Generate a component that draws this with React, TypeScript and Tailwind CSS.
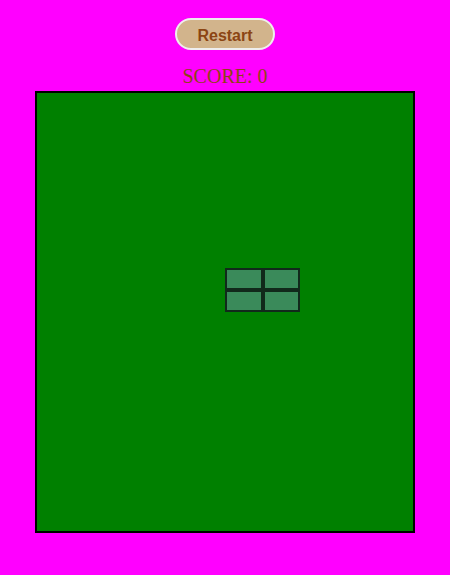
import * as React from "react";

const COLS = 10;
const ROWS = 20;

// active piece: the O block
const piece = [
  { x: 5, y: 8 },
  { x: 6, y: 8 },
  { x: 5, y: 9 },
  { x: 6, y: 9 },
];

export default function App() {
  const [score, setScore] = React.useState(0);

  const cells = [];
  for (let y = 0; y < ROWS; y++) {
    for (let x = 0; x < COLS; x++) {
      const filled = piece.some((p) => p.x === x && p.y === y);
      cells.push(
        <div
          key={`${x}-${y}`}
          className={filled ? "bg-[#3a8a5a] border-2 border-black/70" : ""}
        />
      );
    }
  }

  return (
    <div className="min-h-screen w-full bg-[#ff00ff] flex flex-col items-center pt-[18px]">
      <button
        onClick={() => setScore(0)}
        className="w-[100px] h-8 pt-[3px] rounded-full bg-[#d2b48c] border-2 border-[#eeeeee] text-[#8b4513] font-bold text-[16px] leading-none font-['Liberation_Sans',Arial,sans-serif]"
      >
        Restart
      </button>
      <div className="mt-[15px] text-[20px] leading-[22px] text-[#8b4513] font-['Liberation_Serif','Times_New_Roman',serif]">
        SCORE: {score}
      </div>
      <div className="mt-[4px] w-[380px] h-[442px] border-2 border-black bg-[#008000] grid grid-cols-10 grid-rows-[repeat(20,minmax(0,1fr))]">
        {cells}
      </div>
    </div>
  );
}
